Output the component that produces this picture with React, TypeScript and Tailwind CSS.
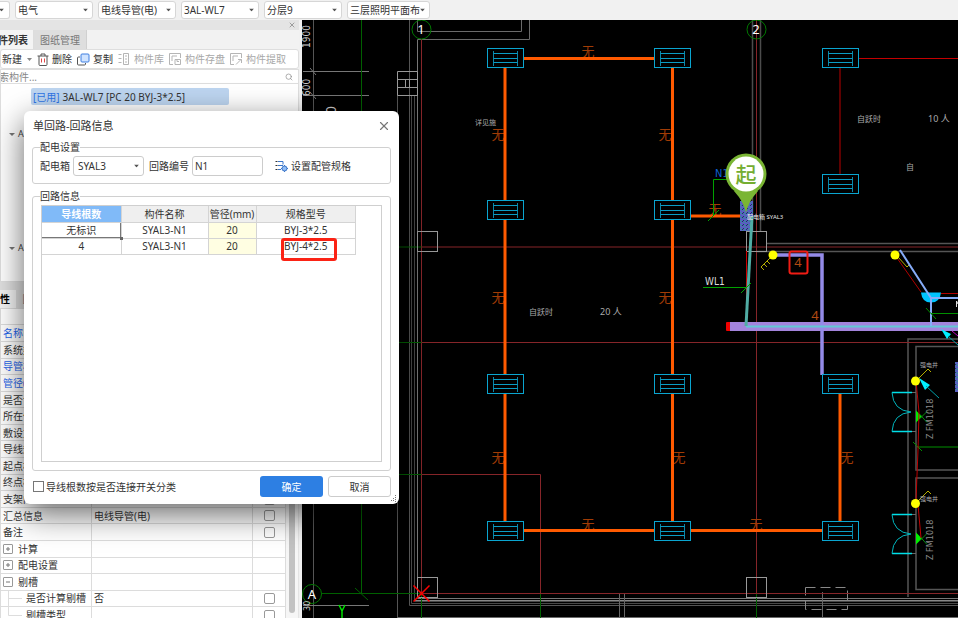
import { Fragment, type ReactNode } from "react";
import { Search, X } from "lucide-react";

const TOP_FILTERS = ["电气", "电线导管(电)", "3AL-WL7", "分层9", "三层照明平面布"];

type PropRow = {
  name: string;
  value?: string;
  kind?: "key" | "group-closed" | "group-open" | "child" | "child-last";
  check?: boolean;
};

const PROPERTIES: PropRow[] = [
  { name: "\u00a0" },
  { name: "名称", kind: "key" },
  { name: "系统类型", check: true },
  { name: "导管材质", kind: "key", check: true },
  { name: "管径(mm)", kind: "key", check: true },
  { name: "是否计量", check: true },
  { name: "所在位置", check: true },
  { name: "敷设方式", check: true },
  { name: "导线规格", check: true },
  { name: "起点标高", check: true },
  { name: "终点标高", check: true },
  { name: "支架间距", check: true },
  { name: "汇总信息", value: "电线导管(电)", check: true },
  { name: "备注", check: true },
  { name: "计算", kind: "group-closed" },
  { name: "配电设置", kind: "group-closed" },
  { name: "剔槽", kind: "group-open" },
  { name: "是否计算剔槽", value: "否", kind: "child", check: true },
  { name: "剔槽类型", kind: "child-last", check: true },
];

const CIRCUITS = [
  { wires: "无标识", part: "SYAL3-N1", size: "20", spec: "BYJ-3*2.5" },
  { wires: "4", part: "SYAL3-N1", size: "20", spec: "BYJ-4*2.5" },
];

const FIXTURES = [
  [505, 58], [672, 58], [840, 58],
  [505, 210], [672, 210], [840, 184],
  [505, 384], [672, 384], [840, 384],
  [505, 531], [672, 531], [840, 531],
];

const NONE_MARKS = [
  [588, 51], [498, 134], [665, 134], [715, 209], [498, 297], [665, 297],
  [498, 457], [679, 457], [847, 457], [588, 524], [756, 524],
];

function Caret() {
  return (
    <svg viewBox="0 0 5 3" className="pointer-events-none absolute right-[5px] top-1/2 h-[3px] w-[5px] -translate-y-1/2">
      <path d="M0 0h5L2.500 3z" fill="#555" />
    </svg>
  );
}

function TopBar() {
  return (
    <header className="flex h-5 shrink-0 items-center gap-[5px] bg-[#f1f1f1]">
      <div className="relative h-[18px] w-[10px] rounded-r-[3px] border border-l-0 border-[#d6d6d6] bg-white">
        <Caret />
      </div>
      {TOP_FILTERS.map((label) => (
        <div key={label} className="relative h-[18px] w-[78px] last:w-[83px]">
          <select
            aria-label={label}
            className="block h-full w-full appearance-none rounded-[3px] border border-[#d6d6d6] bg-white pl-[2px] text-[10px] leading-4 text-[#333]"
          >
            <option>{label}</option>
          </select>
          <Caret />
        </div>
      ))}
    </header>
  );
}

function ToolButton({ children, label, disabled }: { children?: ReactNode; label: string; disabled?: boolean }) {
  return (
    <button
      disabled={disabled}
      className="flex shrink-0 items-center gap-[3px] text-[#333] disabled:gap-1 disabled:text-[#a8a8a8]"
    >
      {children}
      {label}
    </button>
  );
}

function ComponentPanel() {
  return (
    <section className="flex h-[262px] shrink-0 flex-col">
      <div className="flex h-[10px] shrink-0 items-center justify-end bg-[#e4e4e4] pr-[3px]">
        <X className="size-[8px] text-[#777]" strokeWidth={2} />
      </div>
      <div className="flex h-[19px] shrink-0 bg-[#f2f2f2]">
        <button className="flex w-[34px] items-center justify-end overflow-hidden border-r border-[#ddd] bg-[#f4f4f4] pr-[5px] font-semibold whitespace-nowrap text-[#333]">
          构件列表
        </button>
        <button className="w-[53px] border-r border-[#d0d0d0] bg-[#dedede] text-[#777]">图纸管理</button>
      </div>
      <div className="flex h-5 shrink-0 items-center gap-[5px] rounded-[3px] border border-[#dedede] bg-white pl-px whitespace-nowrap">
        <ToolButton label="新建" />
        <svg viewBox="0 0 5 3" className="h-[3px] w-[5px] shrink-0">
          <path d="M0 0h5L2.500 3z" fill="#888" />
        </svg>
        <ToolButton label="删除">
          <svg viewBox="0 0 12 13" className="h-[13px] w-3" fill="none" stroke="#555">
            <path d="M.5 3h11M4 3V1h4v2M2 3v8.500q0 1 1 1h6q1 0 1-1V3" />
            <path d="M4.500 5.500v4M7.500 5.500v4" stroke="#e04848" />
          </svg>
        </ToolButton>
        <ToolButton label="复制">
          <svg viewBox="0 0 13 13" className="size-[13px]" fill="none">
            <path d="M3 4H1.500q-1 0-1 1v6q0 1 1 1h6q1 0 1-1v-1" stroke="#555" />
            <rect x="4" y="1" width="8" height="8" rx="1" fill="#cfe3ff" stroke="#3f7fe0" />
          </svg>
        </ToolButton>
        <ToolButton label="构件库" disabled>
          <svg viewBox="0 0 12 12" className="size-3" fill="none" stroke="#b5b5b5">
            <path d="M.5 1.500h3M.5 5.500h3M.5 9.500h3M5.500.5h5v11h-5zM7 3h2M7 6h2M7 9h2" />
          </svg>
        </ToolButton>
        <ToolButton label="构件存盘" disabled>
          <svg viewBox="0 0 12 12" className="size-3" fill="none" stroke="#b5b5b5">
            <path d="M4 11.500H.5V.5h11V5M3 8V3h5M6 6.500h5.500v5H6zM8 6.500v2h2" />
          </svg>
        </ToolButton>
        <ToolButton label="构件提取" disabled>
          <svg viewBox="0 0 12 12" className="size-3" fill="none" stroke="#b5b5b5">
            <path d="M4 11.500H.5V.5h11V5M3 8V3h5M6 11.500l5-5M8 6.500h3.500V10" />
          </svg>
        </ToolButton>
      </div>
      <div className="flex h-[15px] shrink-0 items-center overflow-hidden border border-[#dedede] bg-white pr-[5px]">
        <input
          aria-label="搜索构件"
          placeholder="搜索构件..."
          className="-ml-4 min-w-0 flex-1 pl-1 text-[10px] leading-3 placeholder:text-[#888]"
        />
        <Search className="size-2 text-[#888]" />
      </div>
      <div className="flex flex-1 flex-col border border-t-0 border-[#dedede] bg-white pt-1">
        <button className="ml-[30px] flex h-[17px] w-[198px] shrink-0 items-center gap-[3px] rounded-[2px] bg-[#bdd5f0] pl-[2px] whitespace-nowrap">
          <span className="text-[#2e74e6]">[已用]</span>
          <span className="text-[#333]">3AL-WL7 [PC 20 BYJ-3*2.5]</span>
        </button>
        <div className="mt-[21px] flex h-[114px] flex-col justify-start gap-[98px] pl-2 text-[9px] leading-4 text-[#444]">
          <span>
            <i className="mr-[3px] inline-block border-x-3 border-t-3 border-x-transparent border-t-[#777] align-middle" />A
          </span>
          <span>
            <i className="mr-[3px] inline-block border-x-3 border-t-3 border-x-transparent border-t-[#777] align-middle" />A
          </span>
        </div>
      </div>
    </section>
  );
}

function PropertyName({ row }: { row: PropRow }) {
  if (row.kind === "group-closed" || row.kind === "group-open") {
    return (
      <span className="flex items-center gap-[5px]">
        <button
          aria-label={row.name}
          className="flex size-[10px] items-center justify-center rounded-[1px] border border-[#999] bg-white"
        >
          <svg viewBox="0 0 6 6" className="size-[6px]" stroke="#777">
            <path d={row.kind === "group-closed" ? "M1 3h4M3 1v4" : "M1 3h4"} />
          </svg>
        </button>
        {row.name}
      </span>
    );
  }
  if (row.kind === "child" || row.kind === "child-last") {
    return (
      <span className="flex items-center gap-1">
        <svg viewBox="0 0 19 12" className="h-3 w-[19px] overflow-visible" fill="none" stroke="#ddd">
          <path d={row.kind === "child" ? "M5.500 -2v16M5.500 6.500H19" : "M5.500 -2v8.500H19"} />
        </svg>
        {row.name}
      </span>
    );
  }
  return <span className={row.kind === "key" ? "text-[#2463eb]" : ""}>{row.name}</span>;
}

function PropertyPanel() {
  return (
    <section className="flex min-h-0 flex-1 flex-col">
      <div className="h-2 shrink-0 bg-[#e0e0e0]" />
      <div className="flex h-[19px] shrink-0 border-b border-[#dcdcdc] bg-[#f0f0f0]">
        <button className="flex w-4 items-center justify-end overflow-hidden bg-[#f4f4f4] pr-[6px] font-semibold whitespace-nowrap">
          属性
        </button>
        <button className="w-[53px] overflow-hidden bg-[#dedede] whitespace-nowrap text-[#777]">图元属性</button>
      </div>
      <div className="flex min-h-0 flex-1 overflow-hidden bg-white">
        <table className="h-[315px] w-[286px] table-fixed border-collapse leading-3 text-[#333]">
          <colgroup>
            <col className="w-[91px]" />
            <col />
            <col className="w-[33px]" />
          </colgroup>
          <tbody>
            {PROPERTIES.map((row, i) => (
              <tr key={i} className="border-b border-[#dcdcdc]">
                <td className="overflow-hidden border-x border-[#dcdcdc] py-0 pl-[2px] whitespace-nowrap">
                  <PropertyName row={row} />
                </td>
                <td className="border-r border-[#dcdcdc] py-0 pl-[2px] whitespace-nowrap">{row.value}</td>
                <td className="border-r border-[#dcdcdc] p-0">
                  {row.check && (
                    <input
                      type="checkbox"
                      aria-label={row.name}
                      className="mx-auto block size-[11px] appearance-none rounded-[2px] border border-[#999] bg-white"
                    />
                  )}
                </td>
              </tr>
            ))}
          </tbody>
        </table>
        <div className="flex flex-1 justify-center border-r border-[#e4e4e4] bg-[#f6f6f6] pb-[5px]">
          <div className="w-[6px] rounded-full bg-[#c2c2c2]" />
        </div>
      </div>
    </section>
  );
}

function Fixture({ x, y }: { x: number; y: number }) {
  return (
    <g transform={`translate(${x} ${y})`} fill="none" strokeWidth="1">
      <rect x="-17.5" y="-9.5" width="36" height="19" fill="#000" stroke="#0aa5d0" />
      <path d="M-11.500 -7V8M12.500 -7V8" stroke="#0a86a8" />
      <path d="M-11.500 -4.500H12.500M-11.500 .5H12.500M-11.500 4.500H12.500" stroke="#0a9cc4" />
    </g>
  );
}

function Door({ y }: { y: number }) {
  return (
    <g fill="none">
      <path d={`M892 ${y}h20M892 ${y + 39}h20`} stroke="#00dfe8" strokeWidth="1.5" />
      <path d={`M892 ${y}q1 18 19 19.500q-18 1.500 -19 19.500`} stroke="#00b8c0" />
      <path d={`M912 ${y}h4M912 ${y + 39}h4`} stroke="#666" />
      <path d={`M916 ${y + 18}v12l6 -6z`} fill="#00ee00" />
      <path d={`M920 ${y + 26}l7 -7M920 ${y + 22}l7 8`} stroke="#0a8a0a" />
    </g>
  );
}

function Drawing() {
  return (
    <svg
      viewBox="302 20 656 598"
      preserveAspectRatio="xMinYMin slice"
      className="absolute inset-0 h-full w-full bg-black"
      fontFamily="'Noto Sans','Noto Sans CJK SC',sans-serif"
    >
      <defs>
        <pattern id="hatch" width="4" height="4" patternUnits="userSpaceOnUse">
          <rect width="4" height="4" fill="#5a5cc4" />
          <path d="M0 0l2 2M3 2v1" stroke="#2c9c8c" />
          <path d="M4 0l-2 2" stroke="#28286c" />
        </pattern>
      </defs>

      {/* outer walls */}
      <g fill="none" stroke="#555">
        <path d="M313.500 20V618M397.500 72V618M409.500 20V605.500H958" />
        <path d="M411.500 96V603.500H958M414.500 96V601.500H958" stroke="#484848" />
        <path d="M417.500 39.500V598.500H958" stroke="#777" />
        <path d="M414.500 600.500H958" stroke="#888" />
        <path d="M397.500 617.500H958M417.500 20V31.500H521.500V20M417.500 39.500H529.500V20" stroke="#6a6a6a" />
        <path d="M752.500 20V231M760.500 20V231" stroke="#4c4c4c" strokeWidth="1.5" />
        <path d="M766 243.500H958M756 251.500H958" stroke="#555" strokeWidth="1.5" />
        <path d="M303 71.500H369M303 95.500H369M310 68l6 7M310 92l6 7M303 605.500H369" stroke="#777" />
        <path d="M397.500 71.500h20v24h-20zM397.500 79.500h20M397.500 87.500h20M405.500 79.500v8M409.500 79.500v8" stroke="#999" />
        <path d="M619.500 594V618M624.500 594V618M822.500 592V618" stroke="#666" />
        <rect x="805.500" y="587.500" width="42" height="22" stroke="#888" strokeDasharray="10 5" />
      </g>

      {/* shaft rooms on the right */}
      <g fill="none" stroke="#555" strokeWidth="1.5">
        <path d="M958 339H908V597M958 346.500H916V470H958M958 478H916V589.500H958" />
      </g>

      {/* axis grid */}
      <g fill="none" stroke="#862529">
        <path d="M421.500 39V593.500H958M756.500 20V593.500M421.500 247H958M421.500 342.500H958M421.500 474.500H540.500V593.500" />
      </g>
      <g fill="none" stroke="#006000">
        <path d="M361.500 20V593.500M322 593.500H421.500V618M540.500 594V618M756.500 594V618M355 588l13 12" />
        <path d="M399 247H421.500M399 342.500H421.500M399 474.500H421.500" />
        <circle cx="421.500" cy="29.500" r="9.500" stroke="#007800" />
        <circle cx="756.500" cy="29.500" r="9.500" stroke="#007800" />
        <circle cx="312" cy="594" r="9.500" stroke="#007800" />
      </g>
      <g fill="none" stroke="#999">
        <rect x="417.500" y="231.500" width="20" height="20" />
        <rect x="746.500" y="231.500" width="20" height="20" />
        <rect x="417.500" y="577.500" width="20" height="20" />
        <rect x="746.500" y="577.500" width="20" height="20" />
      </g>
      <g fill="#fff" fontSize="13" textAnchor="middle">
        <text x="421" y="34">1</text>
        <text x="756" y="34">2</text>
        <text x="312" y="599">A</text>
      </g>
      <g fill="#ccc" fontSize="11" fontFamily="'Liberation Sans Narrow','DejaVu Sans Condensed',sans-serif">
        <text transform="translate(310 48) rotate(-90)" fontSize="10">1900</text>
        <text transform="translate(310 96) rotate(-90)" fontSize="10">600</text>
        <text transform="translate(336 114) rotate(-90)" fontSize="14">0</text>
        <text transform="translate(310 611) rotate(-90)" fontSize="9">30</text>
      </g>
      <path d="M339 605l3 6v7M345 605l-3 6" fill="none" stroke="#00e000" strokeWidth="1.5" />

      {/* circuit wiring */}
      <g fill="#a23c05" fontSize="13" textAnchor="middle">
        {NONE_MARKS.map(([x, y]) => (
          <text key={`${x}-${y}`} x={x} y={y + 5}>
            无
          </text>
        ))}
      </g>
      <g fill="none" stroke="#ff5a00" strokeWidth="3">
        <path d="M505 58V531M672.500 58V531M840 384V531M505 58.500H672M505 530.500H840M672 216H740" />
      </g>
      <path d="M840 58V184" stroke="#7c0000" strokeWidth="1.500" />
      <path d="M840 58.500H958" stroke="#c40000" />
      <path d="M413.500 585.500l16 16M429.500 585.500l-16 16" stroke="#f00" strokeWidth="1.500" />

      {/* trunk */}
      <rect x="729" y="322" width="229" height="9" fill="#a384dc" />
      <path d="M726 323q0-1 1-1h3v9h-3q-1 0-1-1z" fill="#f00000" />
      <path d="M773 255H822V375" fill="none" stroke="#948be8" strokeWidth="3.500" />
      <path d="M746 326.500H958" stroke="#62c8d4" strokeWidth="2" />
      {FIXTURES.map(([x, y]) => (
        <Fixture key={`${x}-${y}`} x={x} y={y} />
      ))}

      {/* distribution box and riser */}
      <rect x="740" y="201" width="13" height="30" fill="url(#hatch)" />
      <path d="M746.500 251V322" stroke="#d00000" />
      <path d="M752 216L746 326" stroke="#50aca4" strokeWidth="3" />
      <g fill="none" stroke="#00a000">
        <path d="M713.500 215V179.500H728M703 287.500H746" />
        <path d="M708 221l11 -11M741 293l10 -10" />
      </g>
      <g fontFamily="'Liberation Sans Narrow','DejaVu Sans Condensed',sans-serif" fontSize="11">
        <text x="715" y="177" fill="#0b62d6">N1</text>
        <text x="705" y="285" fill="#ddd" fontSize="10">WL1</text>
      </g>
      <path d="M746 213q-2-11-12-22h24q-10 11-12 22z" fill="#7ab534" />
      <circle cx="746" cy="174" r="20.500" fill="#7ab534" />
      <circle cx="746" cy="174" r="17.500" fill="#fff" />
      <text x="746" y="182" fill="#74ad31" fontSize="21" fontWeight="500" textAnchor="middle">
        起
      </text>
      <text x="747" y="219" fill="#e8e8e8" fontSize="6">
        配电箱 SYAL3
      </text>

      {/* switches and lamps */}
      <g fill="none" stroke="#b8b000">
        <path d="M771 257l-10 10M767 261l3 3M764 264l3 3M761 267l3 3M898 257l9 10l3 -3" />
        <path d="M918 379l10 -10l3 3M918 501l10 -10l3 3" />
      </g>
      <path d="M897 258L921 292M941 293.500H958" stroke="#b00000" fill="none" />
      <path d="M921 292.500h20q-1 10 -10 10t-10 -10z" fill="#00c4ff" />
      <path d="M900 250L931 298H958M931 298V326" fill="none" stroke="#86acf8" strokeWidth="2" />
      <path d="M931 313.500H958M926 308l10 11" stroke="#009000" fill="none" />
      <path d="M941 329l10 5l-4 5zM919 378l11 7l-5 5z" fill="#00f0ff" />
      <path d="M948 336L958 345M926 386L939 398" stroke="#00a0a8" />
      <path d="M952 331l6 5" stroke="#c000c0" />
      <path d="M956.500 307v-6l1.500 3" stroke="#ddd" fill="none" />
      <rect x="955" y="362" width="3" height="30" fill="url(#hatch)" />

      <Door y={392.5} />
      <Door y={514.5} />
      <path d="M917 447H958M913 442l9 9" stroke="#009000" fill="none" />
      <path d="M916 381L919 412L918 450L916 500M918 505L921 538" stroke="#c00000" fill="none" />
      <g fill="#ffff00">
        <circle cx="773" cy="255" r="4.500" />
        <circle cx="895" cy="255" r="4.500" />
        <circle cx="915.500" cy="381" r="4.500" />
        <circle cx="915.500" cy="503.500" r="4.500" />
      </g>
      <g fill="#888" fontSize="9" fontFamily="'Liberation Sans Narrow','DejaVu Sans Condensed',sans-serif">
        <text transform="translate(933 439) rotate(-90)">Z FM1018</text>
        <text transform="translate(933 560) rotate(-90)">Z FM1018</text>
      </g>

      {/* room notes */}
      <g fill="#aaa" fontSize="8">
        <text x="475" y="125" fontSize="7">详见施</text>
        <text x="857" y="122">自跃时</text>
        <text x="928" y="122" fontSize="9">10 人</text>
        <text x="906" y="170">自</text>
        <text x="529" y="315">自跃时</text>
        <text x="600" y="315" fontSize="9">20 人</text>
        <text x="920" y="367" fontSize="6">强电井</text>
        <text x="920" y="501" fontSize="6">强电井</text>
      </g>

      <g fill="#b04a12" fontSize="13" textAnchor="middle">
        <text x="798" y="267">4</text>
        <text x="815" y="320">4</text>
      </g>
      <rect x="789.500" y="251.500" width="18" height="22" rx="2" fill="none" stroke="#f01c14" strokeWidth="2" />
    </svg>
  );
}

function CircuitTable() {
  return (
    <div className="min-h-0 flex-1 border border-[#cfcfcf] bg-white">
      <table className="w-[314px] table-fixed border-collapse text-center leading-3 text-[#333]">
        <colgroup>
          <col className="w-[79px]" />
          <col className="w-[87px]" />
          <col className="w-12" />
          <col />
        </colgroup>
        <thead>
          <tr className="h-4 bg-[#efefef]">
            <th className="border-r border-b border-[#d4d4d4] bg-[#80baf8] p-0 font-bold text-white">导线根数</th>
            <th className="border-r border-b border-[#d4d4d4] p-0 font-normal">构件名称</th>
            <th className="border-r border-b border-[#d4d4d4] p-0 font-normal whitespace-nowrap">管径(mm)</th>
            <th className="border-r border-b border-[#d4d4d4] p-0 font-normal">规格型号</th>
          </tr>
        </thead>
        <tbody>
          {CIRCUITS.map((c, i) => (
            <tr key={c.wires} className="h-4">
              <td className="relative border-r border-b border-[#d4d4d4] p-0">
                {c.wires}
                {i === 0 && (
                  <Fragment>
                    <span className="absolute inset-0 border-r border-b border-[#777]" />
                    <span className="absolute -right-[2px] -bottom-[2px] size-[3px] bg-[#666]" />
                  </Fragment>
                )}
              </td>
              <td className="border-r border-b border-[#d4d4d4] p-0">{c.part}</td>
              <td className="border-r border-b border-[#d4d4d4] bg-[#fffee2] p-0">{c.size}</td>
              <td className="relative border-r border-b border-[#d4d4d4] p-0">
                {c.spec}
                {i === 1 && (
                  <span className="absolute -top-px left-6 h-[23px] w-14 rounded-[3px] border-[3px] border-[#fb2315]" />
                )}
              </td>
            </tr>
          ))}
        </tbody>
      </table>
    </div>
  );
}

function CircuitDialog() {
  return (
    <div
      role="dialog"
      aria-label="单回路-回路信息"
      className="absolute top-[111px] left-6 flex h-[393px] w-[375px] flex-col rounded-[6px] bg-white px-2 pb-[7px] text-[#333] shadow-[0_10px_32px_rgba(0,0,0,0.6)]"
    >
      <div className="flex h-[30px] shrink-0 items-center justify-between">
        <h2 className="pl-px text-[11px] leading-4">单回路-回路信息</h2>
        <button aria-label="关闭">
          <X className="size-[14px] text-[#777]" strokeWidth={2} />
        </button>
      </div>
      <fieldset className="h-[43px] shrink-0 rounded-[3px] border border-[#d0d0d0] px-[7px]">
        <legend className="leading-3">配电设置</legend>
        <div className="mt-[3px] flex h-5 items-center">
          <label htmlFor="box" className="w-[33px] whitespace-nowrap">配电箱</label>
          <div className="relative h-5 w-[71px]">
            <select
              id="box"
              className="block h-full w-full appearance-none rounded-[3px] border border-[#ccc] bg-white pl-1 text-[10px] leading-4"
            >
              <option>SYAL3</option>
            </select>
            <Caret />
          </div>
          <label htmlFor="loop" className="ml-[5px] w-[43px] whitespace-nowrap">回路编号</label>
          <input
            id="loop"
            defaultValue="N1"
            className="h-5 w-[71px] rounded-[3px] border border-[#ccc] px-[2px] text-[10px]"
          />
          <button className="ml-3 flex items-center gap-[3px] whitespace-nowrap">
            <svg viewBox="0 0 13 12" className="h-3 w-[13px]" fill="none" stroke="#3a74c8">
              <path d="M.5 1.500h2M.5 5.500h2M.5 9.500h2" stroke="#333" />
              <path d="M3 1.500h5v3M3 5.500h5M3 9.500h3" />
              <circle cx="9.500" cy="8.500" r="2.500" fill="#8fbcf6" />
              <path d="M9.500 5v1M9.500 11v1M6 8.500h1M12 8.500h1" />
            </svg>
            设置配管规格
          </button>
        </div>
      </fieldset>
      <fieldset className="mt-[6px] flex min-h-0 flex-1 flex-col rounded-[3px] border border-[#d0d0d0] px-2 pb-2">
        <legend className="-ml-px leading-3">回路信息</legend>
        <div className="flex h-full flex-col pt-[3px]">
          <CircuitTable />
        </div>
      </fieldset>
      <div className="mt-[5px] flex h-[21px] shrink-0 items-center gap-[5px]">
        <label className="mr-auto flex items-center gap-[2px]">
          <input type="checkbox" className="ml-px size-[11px] appearance-none border border-[#777] bg-white" />
          导线根数按是否连接开关分类
        </label>
        <button className="h-[21px] w-[63px] rounded-[3px] bg-[#2d7fe3] text-white">确定</button>
        <button className="h-[21px] w-[63px] rounded-[3px] border border-[#ccc] bg-white">取消</button>
      </div>
      <svg viewBox="0 0 7 7" className="absolute right-[2px] bottom-[2px] size-[7px]" fill="#777">
        <path d="M5 0h1v1H5zM5 2h1v1H5zM3 3h1v1H3zM5 4h1v1H5zM3 5h1v1H3zM1 5h1v1H1zM5 6h1v1H5z" />
      </svg>
    </div>
  );
}

export default function App() {
  return (
    <div className="relative flex h-screen flex-col overflow-hidden bg-[#f1f1f1] font-['Noto_Sans','Noto_Sans_CJK_SC',sans-serif] text-[10px] leading-4">
      <TopBar />
      <div className="flex min-h-0 flex-1">
        <aside className="mr-[3px] flex w-[299px] shrink-0 flex-col overflow-hidden">
          <ComponentPanel />
          <PropertyPanel />
        </aside>
        <main className="relative flex-1 overflow-hidden">
          <Drawing />
        </main>
      </div>
      <CircuitDialog />
    </div>
  );
}
